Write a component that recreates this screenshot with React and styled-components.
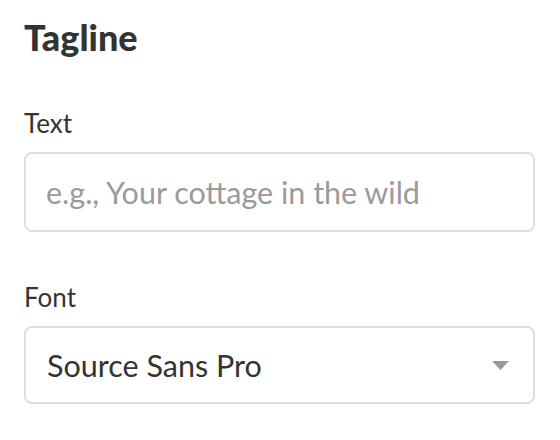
import React from "react";
import styled, { createGlobalStyle } from "styled-components";

const Global = createGlobalStyle`
  html, body { margin: 0; padding: 0; background: #ffffff; }
  body { font-family: Lato, "Open Sans", "Liberation Sans", sans-serif; color: #333333; }
  * { box-sizing: border-box; }
`;

const Panel = styled.section`
  display: flex;
  flex-direction: column;
  width: 560px;
  padding: 15px 25px 0 24px;
`;

const Heading = styled.h2`
  margin: 0;
  font-size: 36px;
  line-height: 44px;
  font-weight: 900;
  color: #333333;
`;

const Field = styled.div`
  display: flex;
  flex-direction: column;
  gap: 13px;
  margin-top: ${(p) => p.$top}px;
`;

const Label = styled.label`
  font-size: 26px;
  line-height: 32px;
  font-weight: 400;
  color: #333333;
`;

const TextInput = styled.input`
  height: 80px;
  width: 100%;
  border: 2px solid #dedede;
  border-radius: 8px;
  padding: 0 20px;
  font-family: inherit;
  font-size: 30.5px;
  color: #333333;
  background: #ffffff;
  outline: none;
  &::placeholder { color: #9a9a9a; opacity: 1; }
`;

const SelectBox = styled.div`
  height: 78px;
  display: flex;
  align-items: center;
  justify-content: space-between;
  border: 2px solid #dedede;
  border-radius: 8px;
  padding: 0 24px 0 21px;
  font-size: 30.5px;
  color: #333333;
  background: #ffffff;
`;

const Caret = styled.svg`
  width: 17px;
  height: 9px;
  display: block;
`;

export default function App() {
  return (
    <>
      <Global />
      <Panel>
        <Heading>Tagline</Heading>
        <Field $top={48}>
          <Label htmlFor="tagline-text">Text</Label>
          <TextInput id="tagline-text" placeholder="e.g., Your cottage in the wild" />
        </Field>
        <Field $top={49}>
          <Label>Font</Label>
          <SelectBox role="combobox">
            <span>Source Sans Pro</span>
            <Caret viewBox="0 0 17 9">
              <path d="M0 0 H17 L8.5 9 Z" fill="#999999" />
            </Caret>
          </SelectBox>
        </Field>
      </Panel>
    </>
  );
}
